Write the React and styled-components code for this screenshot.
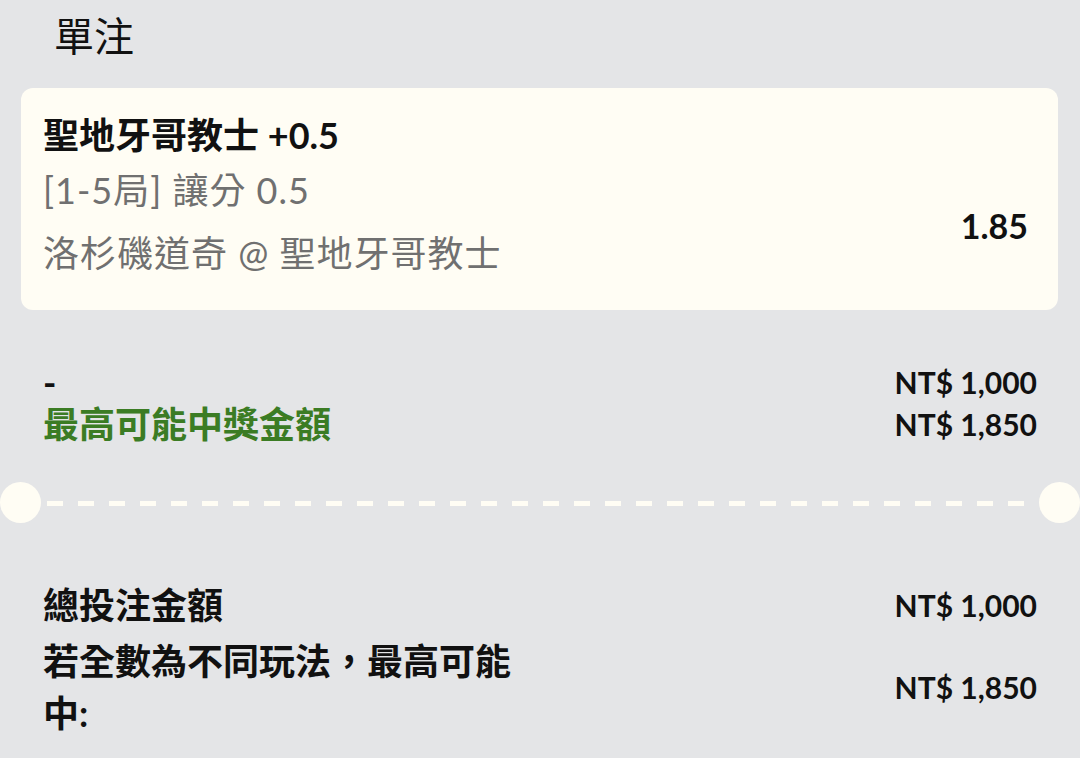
import styled, { createGlobalStyle } from 'styled-components';

//Global
const GlobalStyle = createGlobalStyle`
    html, body {
        margin: 0;
        padding: 0;
        background: #e4e5e7;
    }
    body {
        font-family: Lato, "Noto Sans CJK TC", "Noto Sans", sans-serif;
        color: #111111;
    }
`;

const App = () => {
    return (
        <Page>
            <GlobalStyle />
            <Title>單注</Title>

            <BetCard>
                <Selection>聖地牙哥教士 +0.5</Selection>
                <CardBody>
                    <div>
                        <Market>[1-5局] 讓分 0.5</Market>
                        <Market>洛杉磯道奇 @ 聖地牙哥教士</Market>
                    </div>
                    <Odds>1.85</Odds>
                </CardBody>
            </BetCard>

            <StakeBlock>
                <StakeRow>
                    <StakeLabel>-</StakeLabel>
                    <Amount>NT$ 1,000</Amount>
                </StakeRow>
                <StakeRow>
                    <StakeLabel green>最高可能中獎金額</StakeLabel>
                    <Amount>NT$ 1,850</Amount>
                </StakeRow>
            </StakeBlock>

            <Divider>
                <Notch />
                <Dashes />
                <Notch />
            </Divider>

            <Summary>
                <SummaryRow>
                    <SummaryLabel>總投注金額</SummaryLabel>
                    <Amount>NT$ 1,000</Amount>
                </SummaryRow>
                <SummaryRow>
                    <SummaryLabel>若全數為不同玩法，最高可能中:</SummaryLabel>
                    <Amount>NT$ 1,850</Amount>
                </SummaryRow>
            </Summary>
        </Page>
    );
}

const Page = styled.div`
    display: flex;
    flex-direction: column;
    width: 1080px;
    min-height: 758px;
`;

const Title = styled.h1`
    margin: 12px 0 28px 54px;
    font-size: 40px;
    line-height: 48px;
    font-weight: 400;
`;

const BetCard = styled.div`
    margin: 0 22px 0 21px;
    padding: 23px 30px 25px 22px;
    background: #fffdf4;
    border-radius: 12px;
`;

const Selection = styled.div`
    font-size: 36px;
    line-height: 48px;
    font-weight: 700;
`;

const CardBody = styled.div`
    display: flex;
    justify-content: space-between;
    align-items: center;
`;

const Market = styled.div`
    font-size: 36px;
    line-height: 63px;
    letter-spacing: 1px;
    color: #707070;
`;

const Odds = styled.div`
    padding-top: 6px;
    font-size: 34px;
    font-weight: 700;
`;

const StakeBlock = styled.div`
    display: flex;
    flex-direction: column;
    padding: 51px 43px 0;
`;

const StakeRow = styled.div`
    display: flex;
    justify-content: space-between;
    align-items: center;
    line-height: 42px;
`;

const StakeLabel = styled.span`
    font-size: 36px;
    font-weight: 700;
    color: ${props => props.green ? '#3b7c24' : '#111111'};
`;

const Amount = styled.span`
    font-size: 30px;
    font-weight: 700;
    white-space: nowrap;
`;

const Divider = styled.div`
    display: flex;
    align-items: center;
    margin-top: 37px;
    height: 41px;
`;

const Notch = styled.div`
    width: 41px;
    height: 41px;
    flex: none;
    border-radius: 50%;
    background: #fffdf4;
`;

const Dashes = styled.div`
    flex: 1;
    height: 5px;
    margin: 2px 6px 0;
    background: repeating-linear-gradient(
        to right,
        #fffdf4 0 16px,
        transparent 16px 31px
    );
`;

const Summary = styled.div`
    display: flex;
    flex-direction: column;
    gap: 4px;
    padding: 56px 43px 0;
`;

const SummaryRow = styled.div`
    display: flex;
    justify-content: space-between;
    align-items: center;
`;

const SummaryLabel = styled.span`
    max-width: 50%;
    font-size: 36px;
    line-height: 52px;
    font-weight: 700;
`;

export default App;
